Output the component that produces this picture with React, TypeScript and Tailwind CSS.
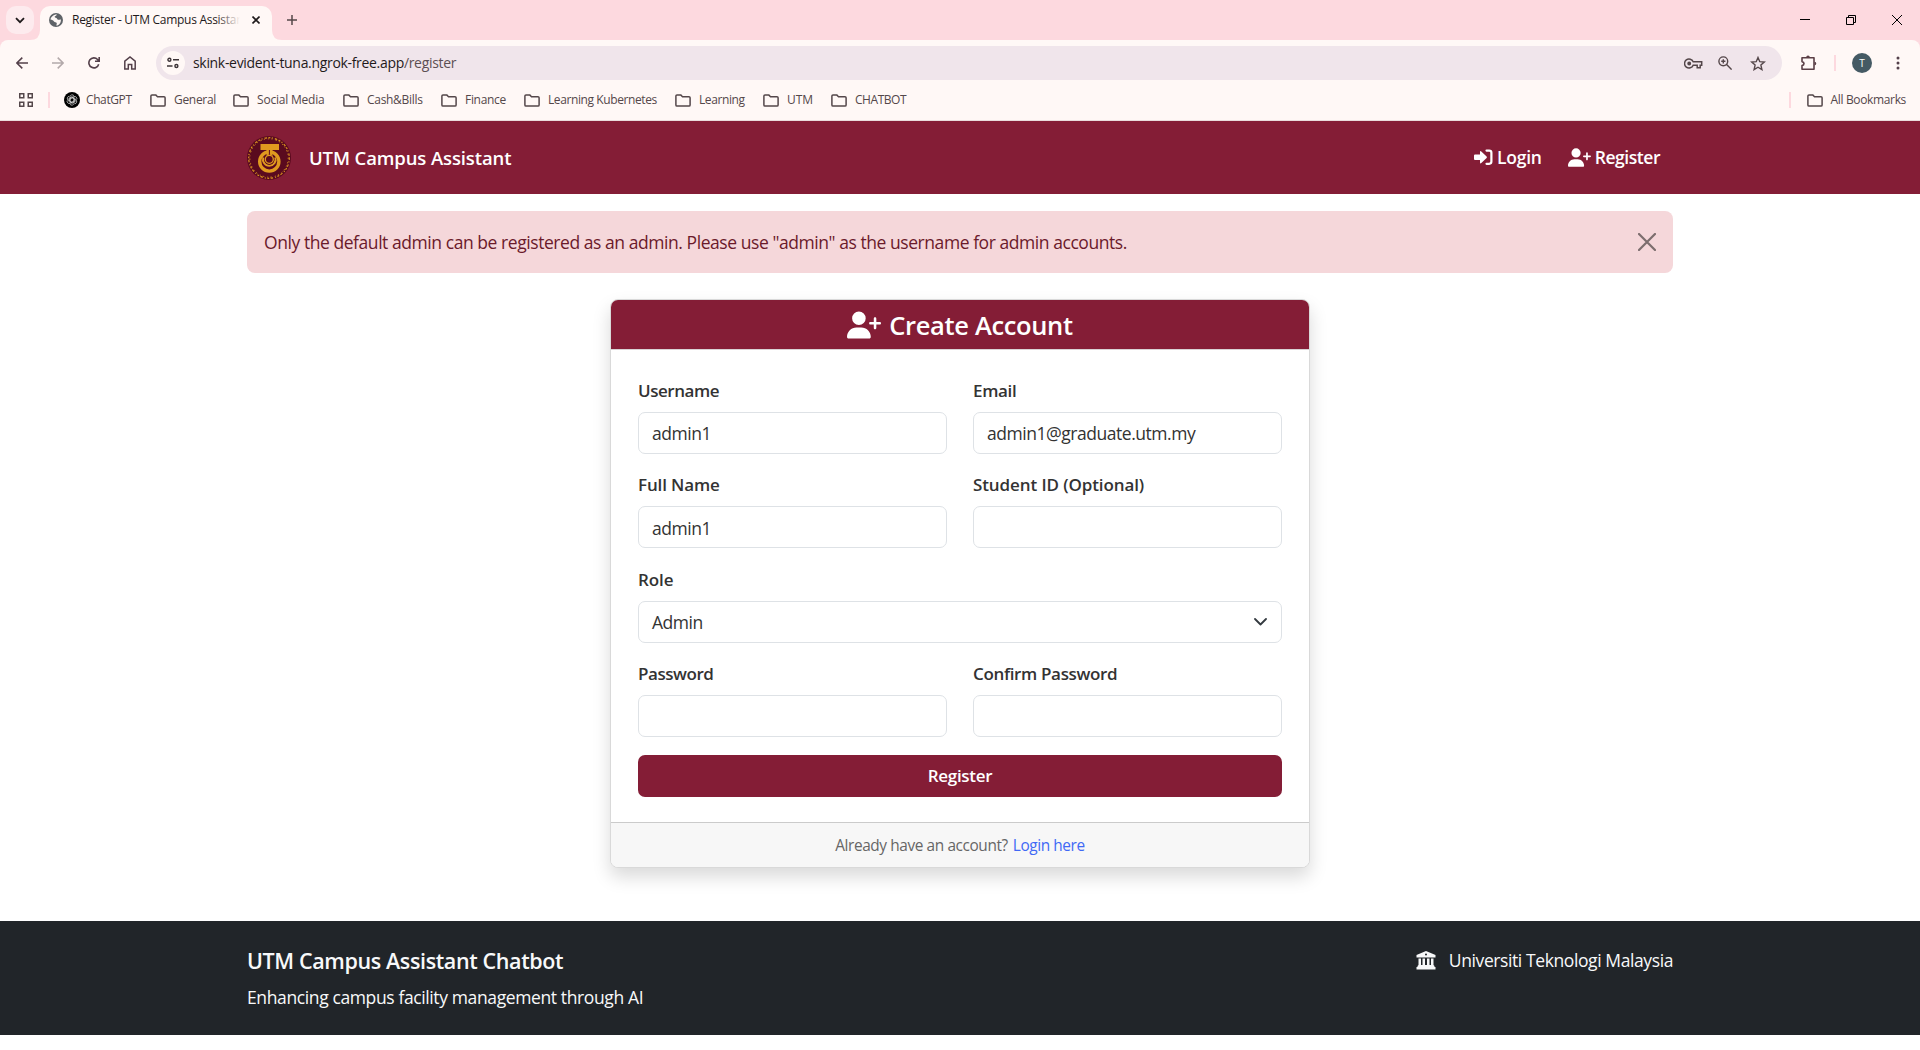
import React from "react";
import { FaUserPlus } from "react-icons/fa6";

const Folder = () => (
  <svg width="16" height="13" viewBox="0 0 16 13" fill="none" stroke="#54474a" strokeWidth="1.5" strokeLinejoin="round" className="shrink-0">
    <path d="M.9 11V2Q.9.9 2 .9h3.7l1.8 1.8H14q1.1 0 1.1 1.1V11q0 1.1-1.1 1.1H2Q.9 12.1.9 11Z" />
  </svg>
);

const bookmarks = [
  { label: "General", box: "w-[83px]", text: "tracking-[-0.3px]" },
  { label: "Social Media", box: "w-[110px]", text: "tracking-[-0.2px]" },
  { label: "Cash&Bills", box: "w-[98px]", text: "tracking-[-0.3px]" },
  { label: "Finance", box: "w-[83px]", text: "tracking-[-0.3px]" },
  { label: "Learning Kubernetes", box: "w-[151px]", text: "tracking-[-0.4px]" },
  { label: "Learning", box: "w-[88px]", text: "tracking-[-0.4px]" },
  { label: "UTM", box: "w-[68px]", text: "tracking-[-0.1px]" },
  { label: "CHATBOT", box: "w-[100px]", text: "tracking-[-0.45px]" },
];

function TabStrip() {
  return (
    <div className="flex h-10 items-end bg-[#fdd9df]">
      <div className="mb-1.5 ml-1.5 flex h-7 w-7 items-center justify-center rounded-[10px] bg-[#fdebee]">
        <svg width="10" height="7" viewBox="0 0 10 7" fill="none" stroke="#1f1a1b" strokeWidth="1.8"><path d="M1 1.2 5 5.2 9 1.2" /></svg>
      </div>
      <div className="relative ml-1.5 flex h-[34px] w-[232px] items-center rounded-t-[10px] bg-[#fff8f6] pb-[6px]">
        <svg className="absolute bottom-0 -left-[10px]" width="10" height="10"><path d="M10 0v10H0Q10 10 10 0Z" fill="#fff8f6" /></svg>
        <svg className="absolute -right-[10px] bottom-0" width="10" height="10"><path d="M0 0v10h10Q0 10 0 0Z" fill="#fff8f6" /></svg>
        <svg className="ml-[9px]" width="14" height="14" viewBox="0 0 14 14">
          <circle cx="7" cy="7" r="7" fill="#5f6368" />
          <path d="M8 1.4c-.4 1.2-2 1.3-2.3 2.2-.3 1 .8 1.2 1.7 1.5 1 .4.6 1.6 1.8 1.7 1 .1 1.5-.6 2.7-.3C12 10 10 12.4 7.6 12.7c-.5-.8.5-1.7.1-2.6C7.300 9 5.600 9.500 5 8.500 4.500 7.600 3 6.700 1.500 6.600c.3-2.700 3-5.400 6.500-5.200Z" fill="#fff8f6" />
          <path d="M8.300 1.300c2 .3 3.400 1.700 3.700 3.200-1 .7-2 .4-2.500-.4-.4-.8.3-1.500-1.200-2.800Z" fill="#5f6368" />
        </svg>
        <div className="relative ml-[9px] w-[168px] overflow-hidden text-[12px] leading-[18px] tracking-[-0.28px] whitespace-nowrap text-[#1f1a1b]">
          Register - UTM Campus Assistant
          <div className="absolute inset-y-0 right-0 w-6 bg-gradient-to-r from-transparent to-[#fff8f6]" />
        </div>
        <svg className="ml-[12px]" width="8" height="8" viewBox="0 0 8 8" stroke="#1f1a1b" strokeWidth="1.6"><path d="m.5.5 7 7M7.500.5l-7 7" /></svg>
      </div>
      <svg className="mb-[15px] ml-[15px]" width="10" height="10" viewBox="0 0 10 10" stroke="#54474a" strokeWidth="1.5"><path d="M5 0v10M0 5h10" /></svg>
      <div className="mr-[18px] mb-[15px] ml-auto flex items-center gap-9 text-black">
        <svg width="10" height="10" stroke="currentColor"><path d="M0 4.500h10" /></svg>
        <svg width="10" height="10" fill="none" stroke="currentColor"><path d="M.5 2.500h7v7h-7ZM2.500 2.500v-2h7v7h-2" /></svg>
        <svg width="10" height="10" stroke="currentColor"><path d="m0 0 10 10M10 0 0 10" /></svg>
      </div>
    </div>
  );
}

function Toolbar() {
  return (
    <div className="bg-[#fdd9df]">
      <div className="flex h-[46px] items-center rounded-t-[8px] bg-[#fff8f6] text-[#54404a]">
        <svg className="ml-4" width="12" height="12" viewBox="0 0 12 12" fill="none" stroke="#54404a" strokeWidth="1.5"><path d="M12 6H1M6.300.6.900 6l5.400 5.400" /></svg>
        <svg className="ml-6" width="12" height="12" viewBox="0 0 12 12" fill="none" stroke="#b3a9aa" strokeWidth="1.5"><path d="M0 6h11M5.700.6 11.100 6l-5.400 5.400" /></svg>
        <svg className="ml-6" width="12" height="12" viewBox="0 0 12 12" fill="none" stroke="#54404a" strokeWidth="1.6"><path d="M10.700 7.200A5 5 0 1 1 9.600 2.500L11 4M11.200 0v4.300H7" /></svg>
        <svg className="ml-6" width="12" height="14" viewBox="0 0 12 14" fill="none" stroke="#54404a" strokeWidth="1.5"><path d="M.8 13V5.200L6 1l5.200 4.200V13H7.700V8.400H4.300V13Z" /></svg>
        <div className="ml-5 flex h-[34px] w-[1626px] items-center rounded-full bg-[#f0e5eb] pr-[16px] pl-[5px]">
          <div className="flex h-6 w-6 items-center justify-center rounded-full bg-[#fff8f6]">
            <svg width="12" height="12" viewBox="0 0 12 12" fill="none" stroke="#3c3437" strokeWidth="1.4"><circle cx="2.400" cy="2.800" r="1.500" /><path d="M6 2.800h6M0 9h5.500" /><circle cx="9.400" cy="9" r="1.500" /></svg>
          </div>
          <div className="ml-[8px] text-[14px] leading-5 tracking-[-0.32px] whitespace-nowrap text-[#1f1a1b]">
            skink-evident-tuna.ngrok-free.app<span className="text-[#5c4f53]">/register</span>
          </div>
          <svg className="ml-auto" width="19" height="11" viewBox="0 0 19 11" fill="none" stroke="#54474a" strokeWidth="1.5"><path d="M9.200 3.800a4.500 4.500 0 1 0 0 3.400h4v2.500h3V7.200h1.500V3.800Z" /><circle cx="5.200" cy="5.500" r="1.200" fill="#54474a" /></svg>
          <svg className="ml-[15px]" width="14" height="14" viewBox="0 0 14 14" fill="none" stroke="#54474a" strokeWidth="1.4"><circle cx="5.300" cy="5.300" r="4.400" /><path d="m8.600 8.600 5 5M5.300 3.200v4.200M3.200 5.300h4.200" /></svg>
          <svg className="ml-[18px]" width="16" height="15" viewBox="0 0 16 15" fill="none" stroke="#54474a" strokeWidth="1.4"><path d="m8 1.500 1.800 4.200 4.500.4-3.400 3 1 4.500L8 11.200l-3.900 2.400 1-4.500-3.400-3 4.500-.4Z" /></svg>
        </div>
        <svg className="ml-[19px]" width="16" height="16" viewBox="0 0 16 16" fill="none" stroke="#5b3f46" strokeWidth="1.6"><path d="M1 2.700h12v11.600H1v-3.700q2-.3 2-2t-2-2Z" strokeLinejoin="round" /><path d="M5.200 2.200a1.800 1.800 0 0 1 3.600 0ZM13.500 6.800a1.800 1.800 0 0 1 0 3.600Z" fill="#5b3f46" stroke="none" /></svg>
        <div className="ml-[17px] h-4 w-[2px] bg-[#fdd9df]" />
        <div className="ml-4 flex h-5 w-5 items-center justify-center rounded-full bg-[#455a64] text-[10px] text-white">T</div>
        <svg className="ml-6" width="4" height="14" fill="#54404a"><circle cx="2" cy="2" r="1.500" /><circle cx="2" cy="7" r="1.500" /><circle cx="2" cy="12" r="1.500" /></svg>
      </div>
    </div>
  );
}

function Bookmarks() {
  return (
    <div className="flex h-[35px] items-center border-b border-[#e9dcdc] bg-[#fff8f6] pb-[6px] text-[12px] whitespace-nowrap text-[#54474a]">
      <svg className="ml-[19px]" width="14" height="14" viewBox="0 0 14 14" fill="none" stroke="#54474a" strokeWidth="1.5"><path d="M.75.75h4v4h-4ZM9.250.75h4v4h-4ZM.75 9.250h4v4h-4ZM9.250 9.250h4v4h-4Z" /></svg>
      <div className="ml-[15px] h-4 w-[2px] bg-[#fdd9df]" />
      <svg className="ml-[14px]" width="16" height="16" viewBox="0 0 16 16" fill="none" stroke="#d8d8d8" strokeWidth=".7">
        <circle cx="8" cy="8" r="8" fill="#000" stroke="none" />
        {[0, 60, 120, 180, 240, 300].map((a) => (
          <path key={a} transform={`rotate(${a} 8 8)`} d="M6 8V4.600a2.200 2.200 0 0 1 4-.8M6 6.900l3-1.700 2.400 1.400" />
        ))}
      </svg>
      <span className="ml-[6px] w-[64px] tracking-[-0.4px]">ChatGPT</span>
      {bookmarks.map((b) => (
        <div key={b.label} className={`flex shrink-0 items-center gap-2 ${b.box} ${b.text}`}>
          <Folder />
          <span>{b.label}</span>
        </div>
      ))}
      <div className="ml-auto h-4 w-[2px] bg-[#fdd9df]" />
      <div className="mr-[14px] ml-4 flex items-center gap-2 tracking-[-0.35px]"><Folder /><span>All Bookmarks</span></div>
    </div>
  );
}

function Logo() {
  return (
    <svg width="44" height="44" viewBox="0 0 44 44" fill="none">
      <circle cx="22" cy="22" r="22" fill="#5a0a1e" />
      <circle cx="22" cy="22" r="20.300" stroke="#d9931f" strokeWidth="1.200" strokeDasharray="2 1.500 1 2 2.500 1.500" />
      <circle cx="22" cy="22" r="19.200" stroke="#d9931f" strokeWidth=".9" strokeDasharray="1 3 1.500 2.200" />
      <path d="M13.500 8h18.500v6h-18.500Z" fill="#e09a1f" />
      <circle cx="22.300" cy="25.500" r="9.600" stroke="#e09a1f" strokeWidth="3.400" />
      <path d="M16.300 21.500a6.300 6.300 0 1 0 12 0" stroke="#e09a1f" strokeWidth="2" />
      <path d="M19.500 14h6v7h-6Z" fill="#e09a1f" />
      <path d="M22.400 14v7" stroke="#5a0a1e" strokeWidth="1" />
      <circle cx="22.300" cy="23.800" r="5" fill="#5a0a1e" />
      <circle cx="22.300" cy="23.300" r="4" stroke="#e09a1f" strokeWidth="1.300" />
    </svg>
  );
}

function Field({ label, value, tracking = "tracking-[-0.35px]" }: { label: string; value?: string; tracking?: string }) {
  return (
    <div className="min-w-0 flex-1">
      <div className={`h-[35px] pt-[1px] text-[17px] leading-[26px] font-semibold text-[#333] ${tracking}`}>{label}</div>
      <div className="flex h-[42px] items-center rounded-[7px] border border-[#dee2e6] bg-white px-[13px] pt-px text-[17.5px] tracking-[-0.46px] text-[#333]">{value}</div>
    </div>
  );
}

export default function App() {
  return (
    <div className="h-[1050px] w-[1920px] overflow-hidden bg-white font-['Open_Sans','Noto_Sans',sans-serif] text-[17.5px] text-[#333]">
      <TabStrip />
      <Toolbar />
      <Bookmarks />
      <nav className="flex h-[73px] items-center bg-[#841d36] px-[247px] font-semibold text-white">
        <Logo />
        <span className="ml-[18px] text-[18.5px] tracking-[-0.12px]">UTM Campus Assistant</span>
        <div className="mr-[13px] ml-auto flex items-center whitespace-nowrap">
          <svg width="19" height="17" viewBox="0 0 19 17" fill="none"><path d="M12.500 1.600h2.700q2.200 0 2.200 2.200v8.800q0 2.200-2.200 2.200h-2.700" stroke="currentColor" strokeWidth="2.200" strokeLinecap="round" /><path d="M0 6.400q0-1 1-1h5V3q0-1.700 1.300-.6l5.300 5.100q.7.700 0 1.400l-5.300 5.100Q6 15.100 6 13.400V11H1q-1 0-1-1Z" fill="currentColor" /></svg>
          <span className="ml-[4px] tracking-[-0.25px]">Login</span>
          <FaUserPlus className="ml-[26px]" size={23} />
          <span className="ml-[4px] tracking-[-0.45px]">Register</span>
        </div>
      </nav>
      <div className="mx-[247px] mt-[17px] flex h-[62px] items-center rounded-[8px] bg-[#f5d7da] pr-[17px] pl-[17px] text-[#6b1a2b]">
        <span className="pt-px tracking-[-0.44px] whitespace-nowrap">Only the default admin can be registered as an admin. Please use "admin" as the username for admin accounts.</span>
        <svg className="ml-auto" width="18" height="18" viewBox="0 0 18 18" stroke="#7c6d6e" strokeWidth="2.2" strokeLinecap="round"><path d="m1 1 16 16M17 1 1 17" /></svg>
      </div>
      <main className="mx-auto mt-[26px] h-[569px] w-[700px] rounded-[8px] border border-[#d9d9d9] bg-white shadow-[0_9px_18px_rgba(0,0,0,0.15)]">
        <div className="flex h-[50px] items-center justify-center rounded-t-[7px] border-b border-[#d9d2d4] bg-[#841d36] font-semibold text-white">
          <FaUserPlus size={34} />
          <span className="ml-[8px] pt-[2px] text-[25.5px] tracking-[-0.35px]">Create Account</span>
        </div>
        <div className="flex flex-col gap-[17.4px] px-[27px] pt-[27px]">
          <div className="flex gap-[26px]">
            <Field label="Username" value="admin1" tracking="tracking-[-0.45px]" />
            <Field label="Email" value="admin1@graduate.utm.my" />
          </div>
          <div className="flex gap-[26px]">
            <Field label="Full Name" value="admin1" tracking="tracking-[-0.15px]" />
            <Field label="Student ID (Optional)" tracking="tracking-[-0.1px]" />
          </div>
          <div className="relative">
            <Field label="Role" value="Admin" tracking="tracking-[-0.1px]" />
            <svg className="absolute right-[15px] bottom-[17px]" width="13" height="8" viewBox="0 0 13 8" fill="none" stroke="#343a40" strokeWidth="1.8" strokeLinecap="round" strokeLinejoin="round"><path d="m1 1 5.500 5.500L12 1" /></svg>
          </div>
          <div className="flex gap-[26px]">
            <Field label="Password" tracking="tracking-[-0.45px]" />
            <Field label="Confirm Password" />
          </div>
          <div className="flex h-[42px] items-center justify-center rounded-[7px] bg-[#841d36] text-[17px] font-semibold tracking-[-0.3px] text-white">Register</div>
        </div>
        <div className="mt-[25.4px] flex h-[45px] items-center justify-center gap-[5px] rounded-b-[7px] border-t border-[#cbcbcb] bg-[#f7f7f7] pt-[2px] text-[15.4px] tracking-[-0.4px] text-[#666]">
          <span>Already have an account?</span>
          <span className="text-[#4169f5]">Login here</span>
        </div>
      </main>
      <footer className="mt-[53px] flex h-[114px] justify-between bg-[#212529] px-[247px] pt-[26px] text-[#f8f9fa]">
        <div>
          <div className="text-[21.5px] leading-[28px] font-semibold tracking-[-0.38px]">UTM Campus Assistant Chatbot</div>
          <div className="mt-[9px] leading-[26px] tracking-[-0.38px]">Enhancing campus facility management through AI</div>
        </div>
        <div className="flex h-[27px] items-center">
          <svg width="20" height="19" viewBox="0 0 20 19" fill="currentColor"><path fillRule="evenodd" d="M10 0 19.500 4v2.500H.5V4ZM10 2.600a1 1 0 1 0 0 2 1 1 0 0 0 0-2ZM2.500 7.500H5V14h1.500V7.500H9V14h2V7.500h2.500V14H15V7.500h2.500V14l1 1v1h1v2.500H.5V16h1v-1l1-1Z" /></svg>
          <span className="ml-[13px] tracking-[-0.4px]">Universiti Teknologi Malaysia</span>
        </div>
      </footer>
    </div>
  );
}
